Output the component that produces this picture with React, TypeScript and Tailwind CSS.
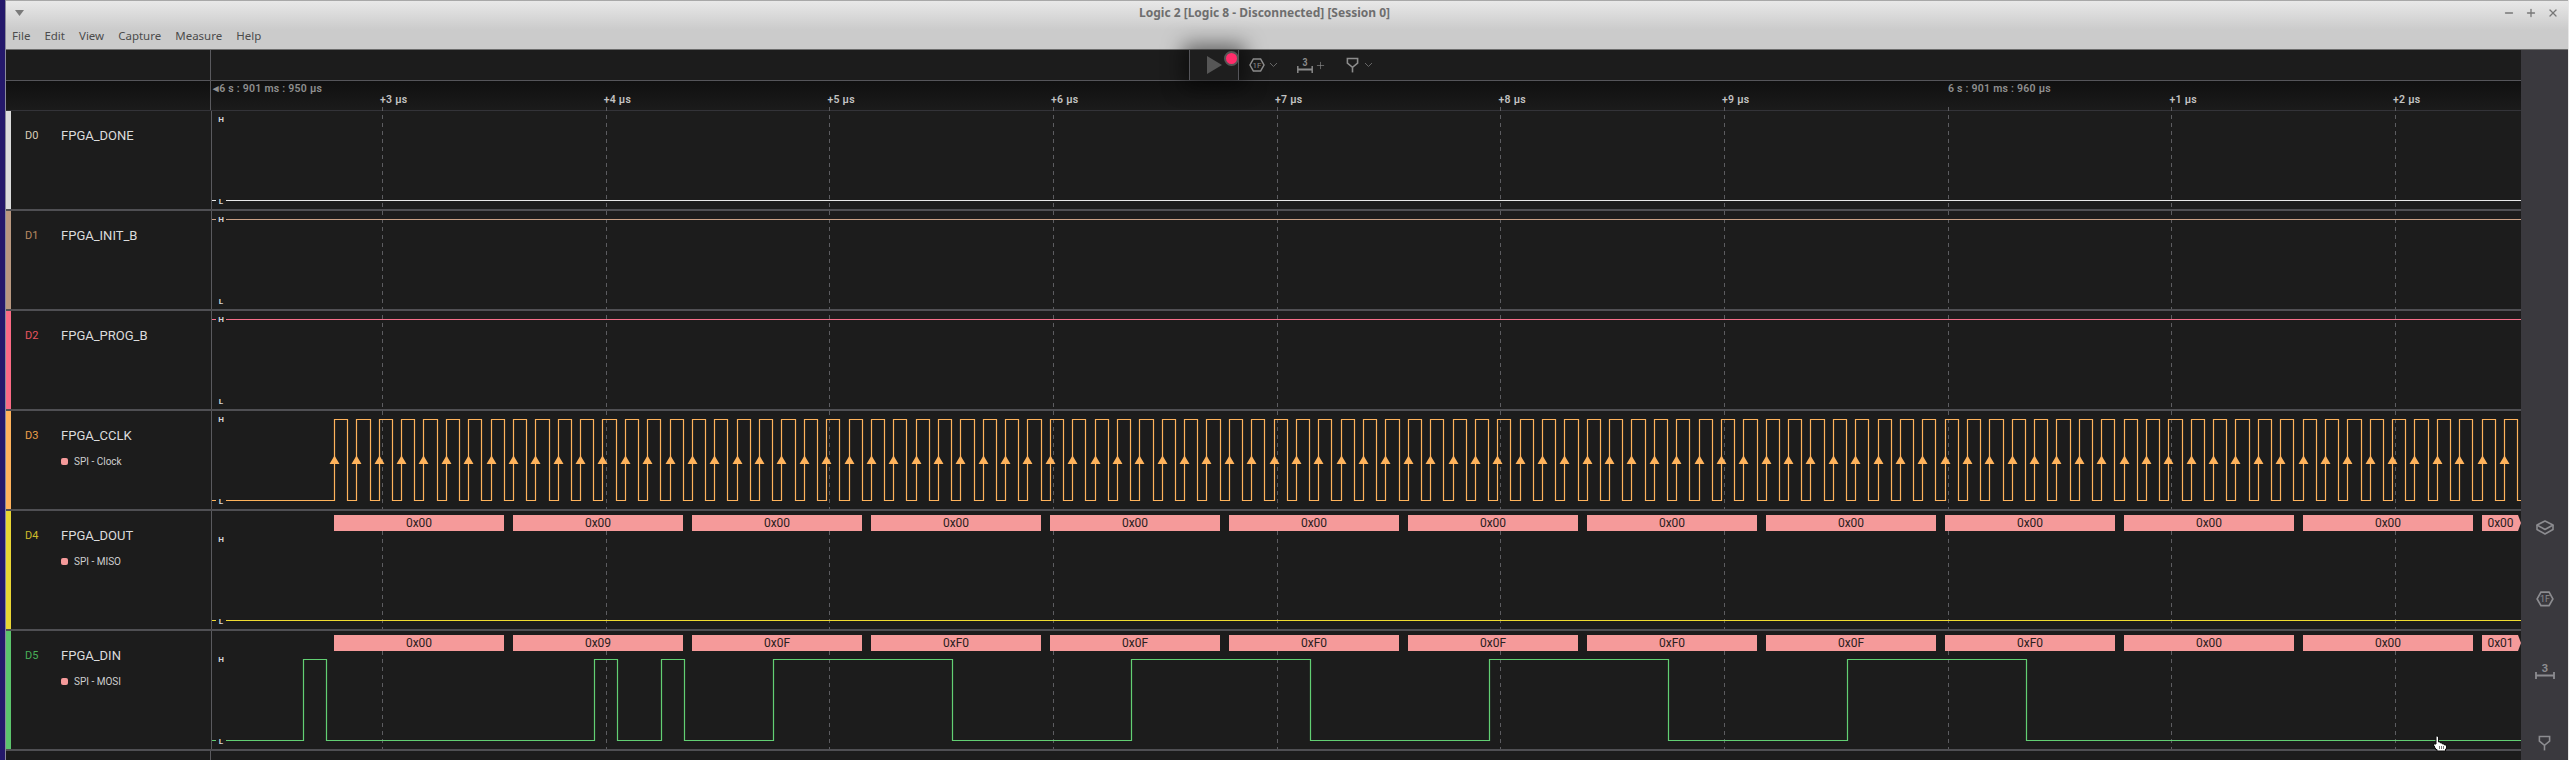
import React from "react";
import { Minus, Plus, X } from "lucide-react";

const CX = 212; // canvas left edge
const CW = 2309;
const T0 = 334;
const P = 22.37;
const FALL0 = 325.7 - CX;
const px = (v: number) => Math.round(v) + 0.5;

function clockPath(low: number, high: number) {
  let d = `M0 ${low} H${px(T0 - CX)}`;
  let k = 0;
  while (true) {
    const rise = px(T0 - CX + k * P);
    const fall = px(T0 - CX + k * P + 13.2);
    const next = px(T0 - CX + (k + 1) * P);
    if (rise > CW) break;
    d += ` H${rise} V${high}`;
    if (fall > CW) {
      d += ` H${CW}`;
      break;
    }
    d += ` H${fall} V${low}`;
    if (next > CW) {
      d += ` H${CW}`;
      break;
    }
    k++;
  }
  return d;
}

function arrows(y: number) {
  const out: string[] = [];
  for (let k = 0; k < 98; k++) {
    const x = Math.round(T0 - CX + k * P) + 0.5;
    if (x > CW - 8) break;
    out.push(`M${x - 5} ${y + 4} L${x} ${y - 4.5} L${x + 5} ${y + 4} Z`);
  }
  return out.join(" ");
}

function dinPath(low: number, high: number) {
  const edges = [-1, 0, 12, 13, 15, 16, 20, 28, 36, 44, 52, 60, 68, 76];
  let d = `M0 ${low}`;
  let lvl = false;
  for (const e of edges) {
    const x = px(FALL0 + e * P);
    d += ` H${x} V${lvl ? low : high}`;
    lvl = !lvl;
  }
  return d + ` H${CW}`;
}

type Row = {
  id: string;
  name: string;
  bar: string;
  idColor: string;
  height: string;
  stroke: string;
  path: string;
  h: number;
  l: number;
  sub?: string;
  segs?: string[];
  arrows?: string;
};

const rows: Row[] = [
  { id: "D0", name: "FPGA_DONE", bar: "bg-[#dcdcdc]", idColor: "text-[#d8cdb8]", height: "h-[100px]", stroke: "#e8e8e8", path: `M0 89.5 H${CW}`, h: 8, l: 90 },
  { id: "D1", name: "FPGA_INIT_B", bar: "bg-[#b99880]", idColor: "text-[#b98a62]", height: "h-[100px]", stroke: "#c9a086", path: `M0 8.5 H${CW}`, h: 8, l: 90 },
  { id: "D2", name: "FPGA_PROG_B", bar: "bg-[#fb6a85]", idColor: "text-[#e8555f]", height: "h-[100px]", stroke: "#f5708a", path: `M0 8.5 H${CW}`, h: 8, l: 90 },
  { id: "D3", name: "FPGA_CCLK", bar: "bg-[#ffb35c]", idColor: "text-[#eda04a]", height: "h-[100px]", stroke: "#ffb35c", path: clockPath(89.5, 8.5), h: 8, l: 90, sub: "SPI - Clock", arrows: arrows(49) },
  { id: "D4", name: "FPGA_DOUT", bar: "bg-[#e9d634]", idColor: "text-[#cdbb2a]", height: "h-[120px]", stroke: "#f0dc30", path: `M0 109.5 H${CW}`, h: 28, l: 110, sub: "SPI - MISO", segs: ["0x00", "0x00", "0x00", "0x00", "0x00", "0x00", "0x00", "0x00", "0x00", "0x00", "0x00", "0x00", "0x00"] },
  { id: "D5", name: "FPGA_DIN", bar: "bg-[#5cc46c]", idColor: "text-[#48b058]", height: "h-[120px]", stroke: "#62cf73", path: dinPath(109.5, 28.5), h: 28, l: 110, sub: "SPI - MOSI", segs: ["0x00", "0x09", "0x0F", "0xF0", "0x0F", "0xF0", "0x0F", "0xF0", "0x0F", "0xF0", "0x00", "0x00", "0x01"] },
];

const ticks = [
  { x: 382, t: "+3 µs" },
  { x: 605.7, t: "+4 µs" },
  { x: 829.4, t: "+5 µs" },
  { x: 1053, t: "+6 µs" },
  { x: 1277, t: "+7 µs" },
  { x: 1500.5, t: "+8 µs" },
  { x: 1724, t: "+9 µs" },
  { x: 2171.5, t: "+1 µs" },
  { x: 2395, t: "+2 µs" },
];
const gridXs = [382, 606, 829, 1053, 1277, 1500, 1724, 1948, 2171, 2395];

function HexIcon({ size = 16 }: { size?: number }) {
  return (
    <svg width={size} height={size * 0.875} viewBox="0 0 16 14" fill="none">
      <path d="M4.4 1 H11.6 L15 7 L11.6 13 H4.4 L1 7 Z" stroke="currentColor" strokeWidth="1.5" />
      <text x="8" y="9.9" textAnchor="middle" fontSize="8" fontFamily="Roboto, sans-serif" fill="currentColor">1F</text>
    </svg>
  );
}
function TimingIcon({ width = 20 }: { width?: number }) {
  return (
    <svg width={width} height="16" viewBox="0 0 20 16" preserveAspectRatio="none" fill="none">
      <text x="10" y="8.5" textAnchor="middle" fontSize="11" fontWeight="700" fontFamily="Roboto, sans-serif" fill="currentColor">3</text>
      <path d="M1 9 V16 M19 9 V16 M1 12.5 H19" stroke="currentColor" strokeWidth="1.8" />
    </svg>
  );
}
function TriggerIcon() {
  return (
    <svg width="13" height="16" viewBox="0 0 14 16" fill="none">
      <path d="M1.5 1 H12.5 V6 L7 10.5 L1.5 6 Z" stroke="currentColor" strokeWidth="1.7" />
      <path d="M7 10.5 V16" stroke="currentColor" strokeWidth="1.7" />
    </svg>
  );
}
function Chevron() {
  return (
    <svg width="9" height="6" viewBox="0 0 9 6" fill="none">
      <path d="M1 1 L4.5 4.5 L8 1" stroke="currentColor" strokeWidth="1" />
    </svg>
  );
}

function Channel({ r }: { r: Row }) {
  return (
    <div className={`relative flex shrink-0 border-b-2 border-[#4f4f53] ${r.height}`}>
      <div className={`w-[5px] shrink-0 ${r.bar}`} />
      <div className="flex w-[200px] shrink-0 flex-col gap-[10px] pl-[14px] pt-[17px]">
        <div className="flex h-[16px] items-center">
          <span className={`w-[36px] text-[11px] ${r.idColor}`}>{r.id}</span>
          <span className="text-[13px] text-[#dcdcdc]">{r.name}</span>
        </div>
        {r.sub && (
          <div className="flex h-[14px] items-center pl-[36px]">
            <span className="mr-[6px] h-[7px] w-[7px] rounded-[2px] bg-[#f59a9a]" />
            <span className="text-[10px] text-[#cfcfcf]">{r.sub}</span>
          </div>
        )}
      </div>
      <div className="relative flex-1 border-l border-[#5a5a5e]">
        <svg className="absolute left-0 top-0" width={CW} height="118" fill="none">
          <path d={r.path} stroke={r.stroke} strokeWidth="1.2" />
          {r.arrows && <path d={r.arrows} fill={r.stroke} />}
        </svg>
        <span className="absolute left-[4px] flex h-[10px] w-[10px] items-center justify-center bg-[#1c1c1c] text-[8px] font-bold leading-none text-[#d6d6d6]" style={{ top: r.h - 5 + 1 }}>H</span>
        <span className="absolute left-[4px] flex h-[10px] w-[10px] items-center justify-center bg-[#1c1c1c] text-[8px] font-bold leading-none text-[#d6d6d6]" style={{ top: r.l - 5 + 1 }}>L</span>
        {r.segs && (
          <div className="absolute left-0 top-[4px] flex w-[2309px] gap-[9px] overflow-hidden pl-[122px]">
            {r.segs.map((s, i) =>
              i === 12 ? (
                <div key={i} className="flex h-[16px] w-[39px] shrink-0 items-center justify-center bg-[#f59a9a] pr-[2px] text-[12px] text-[#2a2020] [clip-path:polygon(0_0,calc(100%-3px)_0,100%_50%,calc(100%-3px)_100%,0_100%)]">{s}</div>
              ) : (
                <div key={i} className="flex h-[16px] w-[170px] shrink-0 items-center justify-center bg-[#f59a9a] text-[12px] text-[#2a2020]">{s}</div>
              )
            )}
          </div>
        )}
      </div>
    </div>
  );
}

export default function App() {
  return (
    <div className="flex h-[760px] w-[2569px] overflow-hidden bg-[#24186b] font-['Roboto',sans-serif]">
      <div className="w-[5px] shrink-0 bg-[#24186b]" />
      <div className="flex w-[2563px] shrink-0 flex-col border-l border-[#8a8a9a]">
        {/* title bar */}
        <div className="h-[50px] shrink-0 border-b border-t border-b-[#6e6e6e] border-t-[#a8a8a8] bg-gradient-to-b from-[#e8e8e8] to-[#cbcbcb] to-[60%] font-['Noto_Sans',sans-serif]">
          <div className="flex h-[23px] items-center pr-[9px]">
            <svg className="ml-[9px]" width="9" height="6" viewBox="0 0 9 6"><path d="M0 0 H9 L4.5 6 Z" fill="#7a7a7a" /></svg>
            <span className="ml-[1115px] text-[12px] font-bold text-[#6e6e6e]">Logic 2 [Logic 8 - Disconnected] [Session 0]</span>
            <div className="ml-auto flex items-center gap-[10px] text-[#777]">
              <Minus size={12} strokeWidth={2.6} />
              <Plus size={12} strokeWidth={2.6} />
              <X size={12} strokeWidth={2.6} />
            </div>
          </div>
          <div className="flex h-[24px] items-center gap-[14px] pl-[6px] text-[11.5px] text-[#4c4c4c]">
            <span>File</span><span>Edit</span><span>View</span><span>Capture</span><span>Measure</span><span>Help</span>
          </div>
        </div>

        <div className="flex min-h-0 flex-1">
          {/* main */}
          <div className="relative w-[2515px] shrink-0 bg-[#1c1c1c]">
            {/* toolbar */}
            <div className="relative flex h-[31px] border-b border-[#55555a] bg-[#1c1c1c]">
              <div className="w-[205px] border-r border-[#5a5a5e]" />
              <div className="relative z-20 ml-[978px] flex h-[30px] w-[50px] items-center border-x border-[#55555a] bg-[#1e1e1e] pl-[17px] shadow-[0_0_20px_6px_rgba(0,0,0,0.5)]">
                <div className="h-0 w-0 border-y-[9px] border-l-[15px] border-y-transparent border-l-[#565656]" />
                <span className="absolute left-[34px] top-[1px] h-[15px] w-[15px] rounded-full border-2 border-[#555] bg-[#ff2d6b]" />
              </div>
              <div className="relative z-20 flex items-center pl-[10px] text-[#8c8c8c]">
                <HexIcon />
                <span className="ml-[4px] text-[#666]"><Chevron /></span>
                <span className="ml-[19px]"><TimingIcon width={16} /></span>
                <Plus className="ml-[2px]" size={11} strokeWidth={1.4} />
                <span className="ml-[20px]"><TriggerIcon /></span>
                <span className="ml-[5px] text-[#666]"><Chevron /></span>
              </div>
            </div>
            {/* time header */}
            <div className="relative flex h-[30px] border-b border-[#333338] bg-gradient-to-b from-[#101010] to-[#1b1b1b]">
              <div className="w-[205px] border-r border-[#5a5a5e]" />
              <span className="absolute left-[207px] top-[2px] text-[10.5px] font-semibold leading-[12px] tracking-[0.25px] text-[#8f8f8f]">◂6 s : 901 ms : 950 µs</span>
              <span className="absolute left-[1942px] top-[2px] text-[10.5px] font-semibold leading-[12px] tracking-[0.25px] text-[#8f8f8f]">6 s : 901 ms : 960 µs</span>
              {ticks.map((t) => (
                <span key={t.t} className="absolute top-[13px] text-[10.5px] font-semibold leading-[12px] tracking-[0.25px] text-[#c2c2c2]" style={{ left: t.x - 8 }}>{t.t}</span>
              ))}
            </div>
            {/* grid */}
            <svg className="absolute left-[206px] top-[57px]" width={CW} height="643" fill="none">
              {gridXs.map((x) => (
                <path key={x} d={`M${x - CX + 0.5} 0 V643`} stroke="#5c5c60" strokeDasharray="4 4" />
              ))}
            </svg>
            {rows.map((r) => (
              <Channel key={r.id} r={r} />
            ))}
            <div className="flex h-[9px]">
              <div className="w-[205px] border-r border-[#5a5a5e]" />
            </div>
            {/* mouse cursor */}
            <svg className="absolute left-[2426px] top-[685px] z-30" width="16" height="17" viewBox="0 0 16 17">
              <path d="M4 1 H6 V2 H6.5 V7 H8.5 V8 H10.5 V9 H12.5 V10 H14.5 V14 H13.5 V16 H5 V14.5 H3.5 V13 H2.5 V11 H1.5 V9 H4 Z" fill="#fff" stroke="#111" strokeWidth="1" />
              <path d="M7.5 11 V14 M9.5 11 V14 M11.5 11 V14" stroke="#777" strokeWidth="1" />
            </svg>
          </div>
          {/* right sidebar */}
          <div className="flex w-[47px] shrink-0 flex-col items-center overflow-hidden bg-[#3a393e] pt-[441px] text-[#8c8c90]">
            <div className="flex h-[72px] shrink-0 items-center justify-center">
              <svg width="18" height="15" viewBox="0 0 18 15" fill="none">
                <path d="M9 1 L17 5 L9 9.5 L1 5 Z" stroke="currentColor" strokeWidth="1.6" strokeLinejoin="round" />
                <path d="M1 5 V9.5 L9 14 L17 9.5 V5" stroke="currentColor" strokeWidth="1.6" strokeLinejoin="round" />
              </svg>
            </div>
            <div className="flex h-[72px] shrink-0 items-center justify-center"><HexIcon size={18} /></div>
            <div className="flex h-[72px] shrink-0 items-center justify-center"><TimingIcon /></div>
            <div className="flex h-[72px] shrink-0 items-center justify-center"><TriggerIcon /></div>
          </div>
        </div>
      </div>
      <div className="w-px shrink-0 bg-[#e8e8e8]" />
    </div>
  );
}
